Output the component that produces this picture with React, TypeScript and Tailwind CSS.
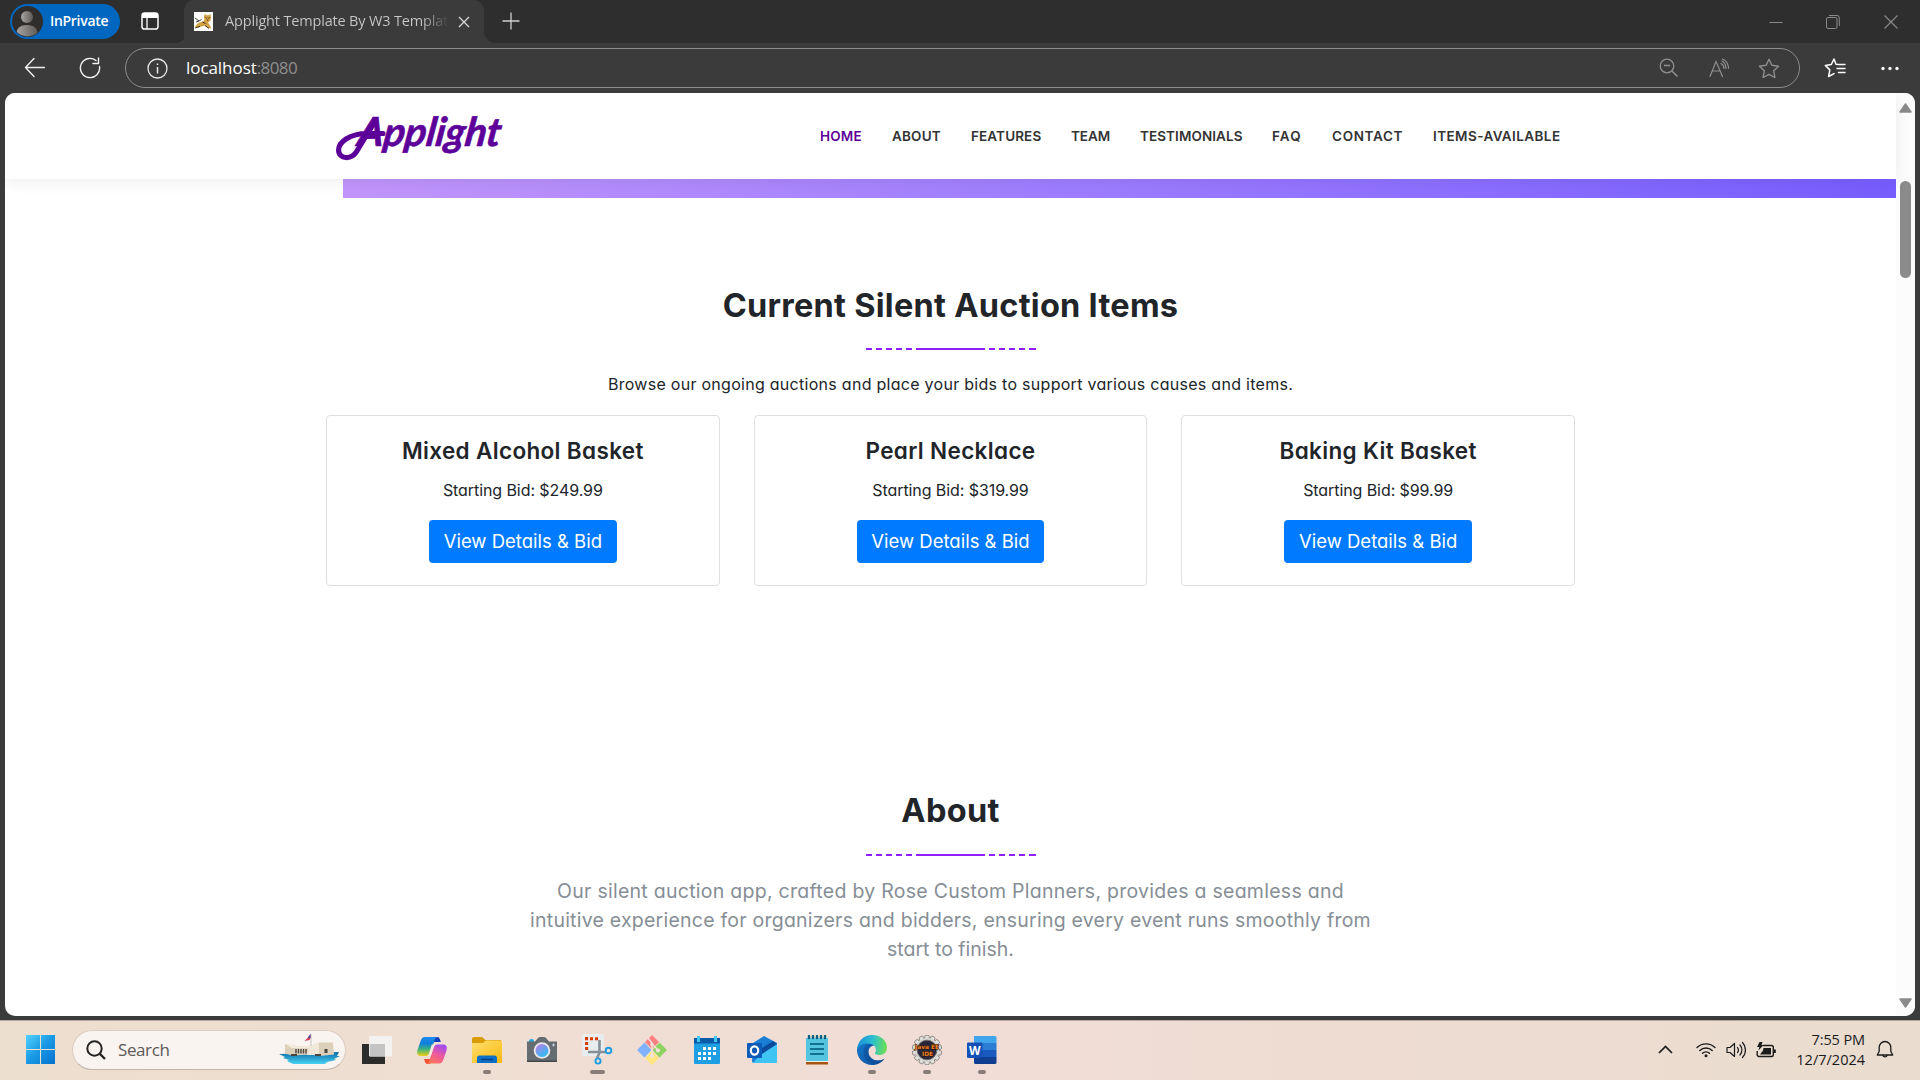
import React from "react";

const POP = "font-['Inter',sans-serif] [font-feature-settings:'cv11']";

/* ---------- browser chrome ---------- */

function TabStrip() {
  return (
    <div className="flex h-[43px] items-stretch bg-[#2e2e2e] pl-[10px]">
      <div className="mt-[4px] flex h-[35px] w-[110px] items-center rounded-full bg-[#0067c0] pl-[2px]">
        <svg width="31" height="31" viewBox="0 0 31 31">
          <defs>
            <linearGradient id="av" x1="0" x2="1">
              <stop offset="0" stopColor="#a8a5a2" />
              <stop offset="1" stopColor="#5c5956" />
            </linearGradient>
            <clipPath id="avc"><circle cx="15.5" cy="15.5" r="15" /></clipPath>
          </defs>
          <circle cx="15.5" cy="15.5" r="15.5" fill="#2f2d2c" />
          <circle cx="15" cy="11" r="6" fill="url(#av)" />
          <path d="M4 31c0-8 3-12 11-12s11 4 11 12z" fill="url(#av)" clipPath="url(#avc)" />
        </svg>
        <span className="ml-[7px] pb-[2px] font-['Open_Sans',sans-serif] text-[14px] font-semibold tracking-[-0.3px] text-white">InPrivate</span>
      </div>
      <svg className="mt-[11px] ml-[20px]" width="20" height="20" viewBox="0 0 20 20" fill="none">
        <rect x="2" y="2" width="16" height="16" rx="2.6" stroke="#fff" strokeWidth="1.5" />
        <path d="M2 7V4.500a2.500 2.500 0 0 1 2.500-2.500h11A2.500 2.500 0 0 1 18 4.500V7z" fill="#fff" />
        <path d="M7 7v11" stroke="#fff" strokeWidth="1.300" />
      </svg>
      <div className="flex w-[324px] items-end pl-[8px]">
        <svg width="16" height="12" viewBox="0 0 16 12" className="ml-[7px] shrink-0"><path d="M0 12a12 12 0 0 0 12-12h4v12z" fill="#3b3b3b" /></svg>
        <div className="-ml-[7px] flex h-[43px] w-[300px] shrink-0 items-center rounded-t-[10px] bg-[#3b3b3b] pl-[10px]">
          <svg width="19" height="19" viewBox="0 0 19 19">
            <path d="M0 0h19v19H0z" fill="#fff" />
            <path d="M1 15c1.500-3 4-5 8-5.500L10.500 8l-.5-3.500.8-2.500 1.700 1.300h2L16.500 2l.5 4-.8 3-2.200 1.500 2 3 1.500 3-3-.5-3-2.500-4 1-3.500 1z" fill="#d2a041" />
            <path d="M11.500 5.500l1.300.8M15.700 5.500l-1.300.8M13 8h1.200M1 6l4 3 2.500-1.500M2 10l3-1M8.500 10l3 1.500M1 16l5-1.500M11 13.500l4 3" stroke="#2c2314" strokeWidth=".9" fill="none" />
          </svg>
          <span className="ml-[12px] w-[224px] shrink-0 overflow-hidden bg-gradient-to-r from-[#c8c8c8] from-88% to-[#3b3b3b] bg-clip-text pb-[2px] font-['Open_Sans',sans-serif] text-[14.5px] tracking-[-0.17px] whitespace-nowrap text-transparent">Applight Template By W3 Templat</span>
          <svg className="ml-[9px] shrink-0" width="12" height="12" viewBox="0 0 12 12"><path d="M1 1l10 10M11 1L1 11" stroke="#d6d6d6" strokeWidth="1.300" /></svg>
        </div>
        <svg width="12" height="12" viewBox="0 0 12 12" className="shrink-0"><path d="M12 12A12 12 0 0 1 0 0v12z" fill="#3b3b3b" /></svg>
      </div>
      <svg className="mt-[12px] ml-[18px]" width="18" height="18" viewBox="0 0 18 18"><path d="M9 .5v17M.5 9h17" stroke="#d0d0d0" strokeWidth="1.300" /></svg>
      <div className="mr-[22px] ml-auto flex items-center text-[#8b8b8b]">
        <svg width="14" height="14" viewBox="0 0 14 14"><path d="M.5 7.500h13" stroke="currentColor" /></svg>
        <svg className="ml-[43px]" width="14" height="14" viewBox="0 0 14 14" fill="none" stroke="currentColor"><rect x=".5" y="2.500" width="10.500" height="11" rx="1.500" /><path d="M3 .5h8a2.300 2.300 0 0 1 2.300 2.300V11" /></svg>
        <svg className="ml-[44px]" width="14" height="14" viewBox="0 0 14 14"><path d="M.5.5l13 13M13.500.5l-13 13" stroke="currentColor" strokeWidth="1.100" /></svg>
      </div>
    </div>
  );
}

function AddressBar() {
  return (
    <div className="flex h-[50px] items-center pl-[24px]">
      <svg width="22" height="22" viewBox="0 0 22 22" fill="none" stroke="#f0f0f0" strokeWidth="1.400" strokeLinecap="round" strokeLinejoin="round"><path d="M20.500 10.500H1.500M10 1.500l-8.500 9 8.500 9" /></svg>
      <svg className="ml-[33px]" width="22" height="22" viewBox="0 0 22 22" fill="none" stroke="#f0f0f0" strokeWidth="1.400" strokeLinecap="round"><path d="M20.500 9.500A9.600 9.600 0 1 1 17 3.500M19.500 1v5.500H14" strokeLinejoin="round" /></svg>
      <div className="ml-[24px] flex h-[40px] w-[1675px] items-center rounded-full border border-[#8d8d8d] pr-[19px] pl-[21px] text-[#8f8f8f]">
        <svg width="21" height="21" viewBox="0 0 21 21" fill="none" stroke="#e8e8e8" strokeWidth="1.300"><circle cx="10.500" cy="10.500" r="9.500" /><path d="M10.500 9v6.500M10.500 5.500v1.600" strokeWidth="1.500" /></svg>
        <span className="ml-[18px] font-['Open_Sans',sans-serif] text-[17px] tracking-[-0.06px] text-white">localhost</span>
        <span className="font-['Open_Sans',sans-serif] text-[17px] tracking-[-0.6px] text-[#8e8e8e]">:8080</span>
        <div className="ml-auto flex items-center">
          <svg width="20" height="20" viewBox="0 0 20 20" fill="none" stroke="currentColor" strokeWidth="1.300"><circle cx="8" cy="8" r="6.800" /><path d="M13 13l5.500 5.500M5 7.500h6" strokeWidth="1.500" /></svg>
          <svg className="ml-[30px]" width="20" height="20" viewBox="0 0 20 20" fill="none" stroke="currentColor" strokeWidth="1.200" strokeLinecap="round"><path d="M1 18.500L7 3.500l6.500 15M3.200 13H11M12 5.500a6 6 0 0 1 3 5M13 3a9 9 0 0 1 4 7.500M13.500 1a10.500 10.500 0 0 1 6 9.500" /></svg>
          <svg className="ml-[29px]" width="22" height="21" viewBox="0 0 22 21" fill="none" stroke="currentColor" strokeWidth="1.400" strokeLinejoin="round"><path d="M11 1.200l2.900 6.100 6.700.9-4.900 4.600 1.200 6.700-5.900-3.200-5.900 3.200 1.200-6.700L1.400 8.200l6.700-.9z" /></svg>
        </div>
      </div>
      <svg className="ml-[24px]" width="22" height="20" viewBox="0 0 22 20" fill="none" stroke="#fff" strokeWidth="1.500" strokeLinejoin="round" strokeLinecap="round"><path d="M21 6.500h-6.500L12 6.200 10 1 7.300 6.500 1.300 7.400l4.500 4.500-1.200 6.600 5.400-2.900M13 10.500h8M14.500 14.500H21" /></svg>
      <svg className="ml-[35px]" width="18" height="5" viewBox="0 0 18 5" fill="#f5f5f5"><circle cx="2" cy="2.500" r="1.700" /><circle cx="9" cy="2.500" r="1.700" /><circle cx="16" cy="2.500" r="1.700" /></svg>
    </div>
  );
}

/* ---------- web page ---------- */

function Logo() {
  return (
    <div className="relative h-[50px] w-[170px] text-[#5d0099]">
      <svg className="absolute top-[2px] left-0" width="60" height="50" viewBox="0 0 60 50" fill="none" stroke="currentColor" strokeWidth="5.200" strokeLinecap="round">
        <path d="M47 20.500H31C14 20.500 2.600 29 2.600 37c0 9.500 13 10 18 1.500L38 10" />
      </svg>
      <span className="absolute -top-[5px] left-[19px] origin-bottom-left -skew-x-[8deg] font-['Lato',sans-serif] text-[40px] leading-[50px] font-bold tracking-[-0.2px] italic [-webkit-text-stroke:0.6px_currentColor]">Applight</span>
    </div>
  );
}

const nav: [string, string][] = [
  ["HOME", "w-[42px] tracking-[0.2px] text-[#5d0099]"],
  ["ABOUT", "w-[49px] tracking-[0.2px]"],
  ["FEATURES", "w-[70px] tracking-[0.12px]"],
  ["TEAM", "w-[39px] tracking-[-0.05px]"],
  ["TESTIMONIALS", "w-[102px] tracking-[0.08px]"],
  ["FAQ", "w-[30px] tracking-[1.1px]"],
  ["CONTACT", "w-[71px] tracking-[0.68px]"],
  ["ITEMS-AVAILABLE", "w-[127px] tracking-[0.42px]"],
];

function Divider() {
  return (
    <div className="mx-auto flex h-[2px] w-[170px] gap-[4px]">
      {[0, 1, 2, 3, 4].map((i) => <i key={i} className="h-[2px] w-[6.200px] bg-[#8f1fff]" />)}
      <i className="h-[2px] flex-1 bg-[#8f1fff]" />
      {[0, 1, 2, 3, 4].map((i) => <i key={i} className="h-[2px] w-[6.200px] bg-[#8f1fff]" />)}
    </div>
  );
}

const items = [
  { name: "Mixed Alcohol Basket", bid: "$249.99" },
  { name: "Pearl Necklace", bid: "$319.99" },
  { name: "Baking Kit Basket", bid: "$99.99" },
];

function Page() {
  return (
    <div className={"ml-[5px] flex h-[923px] w-[1910px] overflow-hidden rounded-[10px] bg-white text-[#212529] " + POP}>
      <div className="flex w-[1891px] flex-col">
        <header className="z-10 flex h-[86px] shrink-0 items-center bg-white pr-[336px] pl-[331px] shadow-[0_3px_14px_rgba(0,0,0,0.07)]">
          <Logo />
          <nav className="ml-auto flex gap-[30px] text-[13.5px] font-semibold whitespace-nowrap text-[#333]">
            {nav.map(([t, c]) => <a key={t} className={c}>{t}</a>)}
          </nav>
        </header>
        <div className="ml-[338px] h-[19px] shrink-0 bg-gradient-to-r from-[#c195fb] to-[#785dff]" />
        <section className="pt-[84px] text-center">
          <h2 className="text-[32.5px] leading-[48px] font-bold tracking-[0.27px]">Current Silent Auction Items</h2>
          <div className="pt-[18px]"><Divider /></div>
          <p className="mt-[22px] text-[16px] leading-[24px] tracking-[0.28px]">Browse our ongoing auctions and place your bids to support various causes and items.</p>
          <div className="mt-[19px] mr-[321px] ml-[321px] grid grid-cols-3 gap-[34px]">
            {items.map((it) => (
              <div key={it.name} className="flex h-[171px] flex-col items-center rounded-[4px] border border-[#dfdfdf] pt-[20px]">
                <h3 className="text-[22.5px] leading-[30px] font-semibold tracking-[0.35px]">{it.name}</h3>
                <p className="mt-[12px] text-[16px] leading-[24px] tracking-[-0.08px]">Starting Bid: {it.bid}</p>
                <button className="mt-[18px] h-[43px] w-[187.500px] rounded-[4px] bg-[#007bff] text-[18.5px] text-white">View Details &amp; Bid</button>
              </div>
            ))}
          </div>
        </section>
        <section className="mt-[201px] text-center">
          <h2 className="text-[32.5px] leading-[48px] font-bold tracking-[0.3px]">About</h2>
          <div className="pt-[19px]"><Divider /></div>
          <p className="mx-auto mt-[21px] text-[19.5px] leading-[29px] whitespace-nowrap text-[#868e96]">
            <span className="block tracking-[0.27px]">Our silent auction app, crafted by Rose Custom Planners, provides a seamless and</span>
            <span className="block tracking-[0.23px]">intuitive experience for organizers and bidders, ensuring every event runs smoothly from</span>
            <span className="block">start to finish.</span>
          </p>
        </section>
      </div>
      <div className="flex w-[19px] flex-col items-center bg-[#fcfcfc] pt-[10px] pb-[8px]">
        <svg width="13" height="10" viewBox="0 0 13 10"><path d="M6.500 1L12 9H1z" fill="#8b8b8b" stroke="#8b8b8b" strokeWidth="1.500" strokeLinejoin="round" /></svg>
        <div className="mt-[68px] h-[97px] w-[11px] rounded-full bg-[#8b8b8b]" />
        <svg className="mt-auto" width="13" height="10" viewBox="0 0 13 10"><path d="M6.500 9L12 1H1z" fill="#8b8b8b" stroke="#8b8b8b" strokeWidth="1.500" strokeLinejoin="round" /></svg>
      </div>
    </div>
  );
}

/* ---------- taskbar ---------- */

function Monument() {
  return (
    <svg width="61" height="31" viewBox="0 0 61 31">
      <defs><linearGradient id="sea" x1="0" y1="0" x2="0" y2="1"><stop offset="0" stopColor="#0b6aa5" /><stop offset="1" stopColor="#49d3f5" /></linearGradient></defs>
      <path d="M0 20l60-2-2 4h3l-6 3 2 1-9 2-2 2H14l-6-3 2-1-6-2 2-1z" fill="url(#sea)" />
      <path d="M6 10l14 2.500h10l10-4h14l1 12-14 1.500-10-1.500-18 1-7-2z" fill="#dcd0ba" />
      <path d="M6 10l14 2.500h10v2L13 14z" fill="#f3ebdc" />
      <path d="M40 8.500l-10 4-2 8.500h12z" fill="#efe7d8" />
      <path d="M17 15v4.500M19.500 15v4.500M22 15v4.500M24.500 15v4.500M27 15v4.500" stroke="#4a4540" strokeWidth="1.400" />
      <path d="M45.500 15h3v4h-3zM12 20h6v2h-6zM36 20h6v2h-6z" fill="#4a4540" />
      <path d="M32 0v12" stroke="#c6c2bd" />
      <path d="M31.500 0l-3 4-3 3 5-1 1-2z" fill="#d43c55" />
      <path d="M31.500 0l-2.500 3.500 2.500.5z" fill="#2450a5" />
    </svg>
  );
}

const gearTeeth = Array.from({ length: 14 }, (_, i) => (i * 360) / 14);

function AppIcon({ name }: { name: string }) {
  switch (name) {
    case "taskview":
      return (
        <svg width="30" height="30" viewBox="0 0 30 30">
          <path d="M0 9h23v20H0z" fill="#2c2c2b" /><rect x="7" y="1" width="23" height="20.500" rx="1" fill="#f2f2f2" opacity=".95" /><path d="M8 9h15v12.500H8z" fill="#c4c4c4" />
        </svg>
      );
    case "copilot":
      return (
        <svg width="32" height="30" viewBox="0 0 32 30">
          <defs>
            <linearGradient id="c1" x1="0" y1="0" x2="0" y2="1"><stop offset="0" stopColor="#1a8df0" /><stop offset=".35" stopColor="#0f7fd8" /><stop offset=".65" stopColor="#3fb57c" /><stop offset="1" stopColor="#f2cf14" /></linearGradient>
            <linearGradient id="c2" x1=".7" y1="0" x2=".2" y2="1"><stop offset="0" stopColor="#a24bf0" /><stop offset=".5" stopColor="#ee5a98" /><stop offset="1" stopColor="#fc7a55" /></linearGradient>
          </defs>
          <path d="M16 2h5c2.500 0 3 2 3.800 5h-7z" fill="#123fb8" />
          <path d="M8 24h8l-2 5h-2c-2.500 0-3-2-4-5z" fill="#f5502e" />
          <path d="M9 2h13c-2 0-3 1.500-3.700 4l-4 12c-.8 2.400-2 3-4 3H5C1.500 21 .5 18.500 1.500 15L4.800 5.500C5.600 3 7 2 9 2z" fill="url(#c1)" />
          <path d="M23 28.500H10c2 0 3-1.500 3.700-4l4-12c.8-2.400 2-3 4-3H27c3.500 0 4.500 2.500 3.500 6l-3.300 9.500c-.8 2.500-2.200 3.500-4.200 3.500z" fill="url(#c2)" />
          <path d="M17 9.500h-1.200L13 18.500c-.3 1.200-1 2.100-2 2.500h3.800l2.900-8.500c.4-1.300 1-2.300 2-3z" fill="#f6e9e2" />
        </svg>
      );
    case "folder":
      return (
        <svg width="30" height="28" viewBox="0 0 30 28">
          <defs><linearGradient id="fo" x1="0" y1="0" x2="1" y2="1"><stop offset="0" stopColor="#ffdf71" /><stop offset="1" stopColor="#fbb90f" /></linearGradient></defs>
          <path d="M0 3a2 2 0 0 1 2-2h8l3.500 3H29v5H0z" fill="#d99c08" />
          <path d="M0 7h11l3-2.500h14a2 2 0 0 1 2 2V27H0z" fill="url(#fo)" />
          <path d="M5 27v-5a2.500 2.500 0 0 1 2.500-2.500h15A2.500 2.500 0 0 1 25 22v5z" fill="#0f6fc5" /><path d="M9 23.500h12" stroke="#083f7c" strokeWidth="1.400" />
        </svg>
      );
    case "camera":
      return (
        <svg width="30" height="26" viewBox="0 0 30 26">
          <defs><linearGradient id="ca" x1="0" y1="0" x2=".6" y2="1"><stop offset="0" stopColor="#c178e6" /><stop offset="1" stopColor="#30bdf2" /></linearGradient></defs>
          <path d="M2 4q0-2 2.500-2T7 4v2H2z" fill="#23a5dc" />
          <path d="M0 4.500h8L11 1q1-1 2-1h4q1 0 2 1l3 3.500h8V25H0z" fill="#676c70" /><path d="M0 23.500h30V25H0z" fill="#43474a" />
          <circle cx="15" cy="13.500" r="8.300" fill="#e9e9ea" /><circle cx="15" cy="13.500" r="6.500" fill="url(#ca)" />
          <path d="M26.500 6.500v3M25 8h3" stroke="#cfd2d4" />
        </svg>
      );
    case "snip":
      return (
        <svg width="31" height="31" viewBox="0 0 31 31">
          <rect x="0" y="0" width="22" height="22" rx="2" fill="#e9edf0" />
          <path d="M3 4.700h13M4.600 3v13" stroke="#d83b01" strokeWidth="3" strokeDasharray="3 2" />
          <path d="M17.500 6v13L15 24M6 18h18" stroke="#878f96" strokeWidth="2.600" fill="none" />
          <circle cx="26.500" cy="16.500" r="2.800" fill="none" stroke="#1b9de2" strokeWidth="1.900" /><circle cx="16" cy="27" r="2.600" fill="none" stroke="#1b9de2" strokeWidth="1.900" />
        </svg>
      );
    case "git":
      return (
        <svg width="30" height="30" viewBox="0 0 30 30">
          <path d="M15 0l7 7-7 7-7-7z" fill="#ff8080" /><path d="M7.500 7.500l7 7.500-7 7.500L0 15z" fill="#80b3ff" /><path d="M22.500 7.500L30 15l-7.500 7.500-7-7.500z" fill="#8dd35f" /><path d="M15 16l7 7-7 7-7-7z" fill="#ffe680" />
          <path d="M11 3l4 5v14M16 10l5 5" stroke="#f3e1da" strokeWidth="1.500" fill="none" /><circle cx="15" cy="9.500" r="1.800" fill="#f3e1da" /><circle cx="21" cy="15.500" r="2.100" fill="#f3e1da" /><circle cx="15" cy="21" r="2.100" fill="#f3e1da" />
        </svg>
      );
    case "calendar":
      return (
        <svg width="26" height="30" viewBox="0 0 26 30">
          <path d="M0 3h26v25a1 1 0 0 1-1 1H1a1 1 0 0 1-1-1z" fill="#1e9fe3" /><path d="M0 3h26v5.500H0z" fill="#0a5ba8" />
          <path d="M3 1h3v6H3zM20 1h3v6h-3z" fill="#41c8f0" />
          <path d="M9 12h3v3H9zM14 12h3v3h-3zM19 12h3v3h-3zM4 17h3v3H4zM9 17h3v3H9zM14 17h3v3h-3zM19 17h3v3h-3zM4 22h3v3H4zM9 22h3v3H9zM14 22h3v3h-3z" fill="#fff" />
        </svg>
      );
    case "outlook":
      return (
        <svg width="30" height="28" viewBox="0 0 30 28">
          <path d="M6 7L17 0l13 7v18a2 2 0 0 1-2 2H7a2 2 0 0 1-2-2z" fill="#1a7fd4" /><path d="M15 17L30 8v17a2 2 0 0 1-2 2H6z" fill="#3fc5f4" /><path d="M12 14L26 5l4 3-15 10z" fill="#0a4a9c" />
          <rect x="0" y="7" width="15" height="15" rx="1" fill="#0c5bb8" />
          <ellipse cx="7.500" cy="14.500" rx="3.700" ry="4.100" stroke="#fff" strokeWidth="2.200" fill="none" />
        </svg>
      );
    case "notepad":
      return (
        <svg width="22" height="30" viewBox="0 0 22 30">
          <path d="M0 27h22v2.500H0z" fill="#a5540d" /><path d="M0 25h22v2H0z" fill="#f0f0f0" /><path d="M0 3h22v23H0z" fill="#55c4df" />
          <path d="M4 9h14M4 14h14M4 19h14" stroke="#12708f" strokeWidth="1.800" />
          <path d="M3 1V3M7 1V3M11 1V3M15 1V3M19 1V3" stroke="#0d5f7c" strokeWidth="2.400" strokeLinecap="round" />
        </svg>
      );
    case "edge":
      return (
        <svg width="30" height="30" viewBox="0 0 30 30">
          <defs>
            <linearGradient id="e1" x1="0" y1=".4" x2="1" y2=".5"><stop offset="0" stopColor="#1b8fd8" /><stop offset=".5" stopColor="#2bbfd2" /><stop offset="1" stopColor="#6ce04f" /></linearGradient>
            <linearGradient id="e2" x1="0" y1="0" x2="1" y2="1"><stop offset="0" stopColor="#1478c8" /><stop offset="1" stopColor="#124f9f" /></linearGradient>
          </defs>
          <path d="M0 14C.8 6 7 0 15 0c9 0 15 6 15 12.500 0 5-3.800 7.500-7.500 7.500-3 0-4.500-1-4.500-2 0-.7 1-1.200 1-3 0-3.500-3-6-7-6-6 0-10 3-12 5z" fill="url(#e1)" />
          <path d="M0 14c2-3.500 6-5.500 10.500-5.500 3 0 5 .8 6.500 2-4 .5-5.800 3.500-5.500 7 .4 4.500 4.500 8 9.500 8 3 0 5-1 6.500-2C25 27.500 20 30 15 30 6 30-.5 22.500 0 14z" fill="url(#e2)" />
          <path d="M9.500 10c-3.500 3-4 9-1 13.500 2.500 4 7 6.300 9.500 6.200 4-.7 7.500-3 9.500-6.200-1.500 1-3.500 2-6.500 2-5 0-9.100-3.500-9.500-8-.3-3.500 1.500-6.500 5.500-7-2-1.300-5-1.500-7.500-.5z" fill="#0d4a93" opacity=".55" />
        </svg>
      );
    case "eclipse":
      return (
        <svg width="30" height="30" viewBox="0 0 30 30">
          {gearTeeth.map((a) => <rect key={a} x="12.800" y="0.300" width="4.400" height="6" rx="1" fill="#e2e2e0" stroke="#6d6a66" strokeWidth=".7" transform={`rotate(${a} 15 15)`} />)}
          <circle cx="15" cy="15" r="12" fill="#d6d5d2" /><circle cx="15" cy="15" r="9.800" fill="#29263c" stroke="#6d6a66" />
          <text x="15" y="14" textAnchor="middle" fontFamily="DejaVu Sans" fontWeight="bold" fontSize="6" textLength="24" lengthAdjust="spacingAndGlyphs" fill="#f07f1e" stroke="#2b1608" strokeWidth=".8" paintOrder="stroke">Java EE</text>
          <text x="15.500" y="20.500" textAnchor="middle" fontFamily="DejaVu Sans" fontWeight="bold" fontSize="6" textLength="11" lengthAdjust="spacingAndGlyphs" fill="#f07f1e" stroke="#2b1608" strokeWidth=".8" paintOrder="stroke">IDE</text>
        </svg>
      );
    default:
      return (
        <svg width="30" height="28" viewBox="0 0 30 28">
          <path d="M7 0h21a1.500 1.500 0 0 1 1.500 1.500V7H7z" fill="#41a5ee" /><path d="M7 7h22.500v7H7z" fill="#2b7cd3" /><path d="M7 14h22.500v7H7z" fill="#185abd" /><path d="M7 21h22.500v5.500A1.500 1.500 0 0 1 28 28H8.500A1.500 1.500 0 0 1 7 26.500z" fill="#103f91" />
          <rect x="0" y="6.500" width="15.500" height="15.500" rx="1" fill="#1450b5" />
          <text x="7.800" y="18.500" textAnchor="middle" fontFamily="Open Sans" fontWeight="bold" fontSize="12" fill="#fff">W</text>
        </svg>
      );
  }
}

const apps: [string, string][] = [
  ["taskview", ""], ["copilot", ""], ["folder", "w-[8px]"], ["camera", ""], ["snip", "w-[15px]"], ["git", ""],
  ["calendar", ""], ["outlook", ""], ["notepad", ""], ["edge", "w-[8px]"], ["eclipse", "w-[8px]"], ["word", "w-[8px]"],
];

function Taskbar() {
  return (
    <div className="flex h-[60px] items-center border-t border-[#b3a79f] bg-gradient-to-r from-[#eddfcf] via-[#f1ddd6] to-[#eadccf] pb-[2px] pl-[26px]">
      <svg width="29" height="29" viewBox="0 0 29 29">
        <defs><linearGradient id="wn" x1="0" y1="0" x2="1" y2="1"><stop offset="0" stopColor="#4fd3fd" /><stop offset=".5" stopColor="#1a98e4" /><stop offset="1" stopColor="#0471cf" /></linearGradient></defs>
        <path d="M0 0h14v14H0zM15 0h14v14H15zM0 15h14v14H0zM15 15h14v14H15z" fill="url(#wn)" />
      </svg>
      <div className="ml-[17px] flex h-[40px] w-[274px] items-center rounded-full border border-[#dccbc0] border-b-[#c4b5ab] bg-[#faf4f0] pr-[5px] pl-[13px]">
        <svg width="20" height="20" viewBox="0 0 20 20" fill="none" stroke="#242424" strokeWidth="2"><circle cx="8.500" cy="8.500" r="7.200" /><path d="M13.500 13.500l5.500 5.500" strokeWidth="2.400" /></svg>
        <span className="ml-[12px] font-['Open_Sans',sans-serif] text-[17px] tracking-[-0.4px] text-[#5c5855]">Search</span>
        <span className="ml-auto"><Monument /></span>
      </div>
      <div className="ml-[3.500px] flex">
        {apps.map(([n, ind]) => (
          <div key={n} className="relative flex h-[57px] w-[55px] items-center justify-center">
            <AppIcon name={n} />
            {ind && <i className={"absolute bottom-[4px] h-[4px] rounded-full bg-[#877c77] " + ind} />}
          </div>
        ))}
      </div>
      <div className="mr-[26px] ml-auto flex items-center text-[#1b1b1b]">
        <svg width="15" height="9" viewBox="0 0 15 9" fill="none" stroke="currentColor" strokeWidth="1.700"><path d="M1 8l6.500-6.500L14 8" /></svg>
        <svg className="ml-[23px]" width="20" height="16" viewBox="0 0 20 16" fill="none" stroke="currentColor" strokeWidth="1.400" strokeLinecap="round"><path d="M1 5.500a13 13 0 0 1 18 0M3.800 8.500a9 9 0 0 1 12.400 0M6.500 11.300a5.200 5.200 0 0 1 7 0" /><circle cx="10" cy="13.700" r="1.500" fill="currentColor" stroke="none" /></svg>
        <svg className="ml-[10px]" width="20" height="18" viewBox="0 0 20 18" fill="none" stroke="currentColor" strokeWidth="1.200" strokeLinecap="round" strokeLinejoin="round"><path d="M1 6.500h3L8.500 2.500v13L4 11.500H1zM11.500 6.500a4 4 0 0 1 0 5M14 4a7.500 7.500 0 0 1 0 10M16.500 1.500a11 11 0 0 1 0 15" /></svg>
        <svg className="ml-[10px]" width="20" height="16" viewBox="0 0 20 16" fill="none" stroke="currentColor" strokeWidth="1.400"><path d="M7 3.500h8.500A1.800 1.800 0 0 1 17.300 5.300v7.400a1.800 1.800 0 0 1-1.800 1.800H3a1.800 1.800 0 0 1-1.800-1.800V9" /><path d="M7.500 6H15v6.500H4l3-4z" fill="currentColor" stroke="none" /><path d="M18.700 7.500v3.500" strokeWidth="2.200" /><path d="M3.500 0h3L5.500 3H7.500L2.500 8.500 3.300 5H1z" fill="currentColor" stroke="none" /></svg>
        <div className="ml-[19px] w-[70px] text-right font-['Open_Sans',sans-serif] text-[14.5px] leading-[20px]">
          <div className="tracking-[-0.1px]">7:55 PM</div>
          <div>12/7/2024</div>
        </div>
        <svg className="ml-[11px]" width="18" height="20" viewBox="0 0 18 20" fill="none" stroke="currentColor" strokeWidth="1.300" strokeLinejoin="round"><path d="M9 1.500A5.800 5.800 0 0 0 3.200 7.300v4L1.300 15h15.400l-1.900-3.700v-4A5.800 5.800 0 0 0 9 1.500zM6.800 15.300a2.300 2.300 0 0 0 4.400 0" /></svg>
      </div>
    </div>
  );
}

export default function App() {
  return (
    <div className="flex h-[1080px] w-[1920px] flex-col overflow-hidden bg-[#3b3b3b]">
      <TabStrip />
      <AddressBar />
      <Page />
      <div className="mt-auto"><Taskbar /></div>
    </div>
  );
}
